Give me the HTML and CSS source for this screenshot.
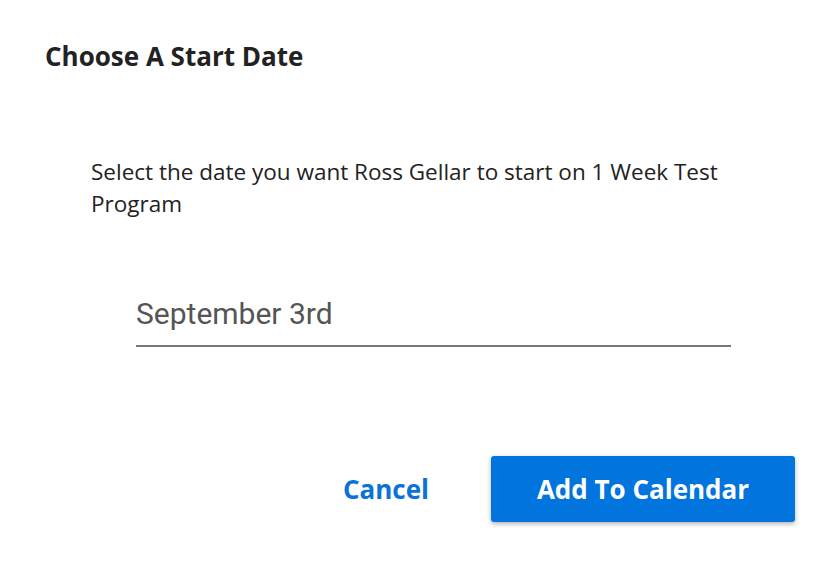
FILE: index.html
```html
<!DOCTYPE html>
<html>
<head>
<meta charset="utf-8">
<link rel="stylesheet" href="styles.css">
</head>
<body>
<div class="dialog">
  <h1 class="title">Choose A Start Date</h1>
  <div class="content">
    <p class="message">Select the date you want Ross Gellar to start on 1 Week Test Program</p>
    <div class="field">
      <div class="field-value">September 3rd</div>
    </div>
  </div>
  <div class="actions">
    <button class="btn-text">Cancel</button>
    <button class="btn-primary">Add To Calendar</button>
  </div>
</div>
</body>
</html>
```
FILE: styles.css
```css
html, body {
  margin: 0;
  padding: 0;
  background: #ffffff;
}
.dialog {
  width: 839px;
  height: 566px;
  box-sizing: border-box;
  padding: 0 44px 0 45px;
  font-family: "Open Sans", "Liberation Sans", sans-serif;
  display: flex;
  flex-direction: column;
}
.title {
  margin: 38px 0 0 0;
  font-size: 26px;
  line-height: 36px;
  font-weight: 700;
  color: #222222;
}
.content {
  padding-left: 46px;
  width: 650px;
}
.message {
  margin: 82px 0 0 0;
  font-size: 22.5px;
  line-height: 32px;
  color: #222222;
}
.field {
  margin: 76px 0 0 45px;
  width: 595px;
  border-bottom: 2px solid #777777;
  padding-bottom: 13px;
}
.field-value {
  font-family: Roboto, "Liberation Sans", sans-serif;
  font-size: 30px;
  line-height: 36px;
  color: #555555;
}
.actions {
  margin-top: 109px;
  display: flex;
  justify-content: flex-end;
  align-items: center;
  gap: 62px;
}
.btn-text {
  background: none;
  border: none;
  padding: 0;
  font-family: "Open Sans", "Liberation Sans", sans-serif;
  font-size: 26px;
  font-weight: 700;
  color: #0a72d8;
  cursor: pointer;
}
.btn-primary {
  width: 304px;
  height: 66px;
  border: none;
  border-radius: 3px;
  background: #0274de;
  color: #ffffff;
  font-family: "Open Sans", "Liberation Sans", sans-serif;
  font-size: 26px;
  font-weight: 700;
  box-shadow: 0 2px 5px rgba(0, 0, 0, 0.3);
  cursor: pointer;
}
```
